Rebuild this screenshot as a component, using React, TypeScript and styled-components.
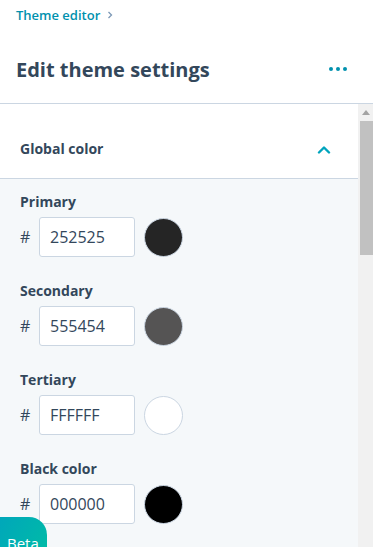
import React from 'react';
import styled, { createGlobalStyle } from 'styled-components';

const GlobalStyle = createGlobalStyle`
  html, body {
    margin: 0;
    padding: 0;
    height: 100%;
    overflow: hidden;
    background: #ffffff;
    font-family: "Open Sans", "Noto Sans", sans-serif;
    color: #33475b;
  }
  #root {
    height: 100%;
  }
`;

const Page = styled.div`
  display: flex;
  flex-direction: column;
  height: 547px;
`;

const Header = styled.header`
  display: flex;
  flex-direction: column;
  gap: 31px;
  padding: 5px 26px 19px 16px;
  border-bottom: 1px solid #cbd6e2;
`;

const Breadcrumb = styled.a`
  display: flex;
  align-items: center;
  gap: 7px;
  font-size: 13px;
  line-height: 20px;
  font-weight: 600;
  color: #0091ae;
  text-decoration: none;
`;

const TitleRow = styled.div`
  display: flex;
  align-items: center;
  justify-content: space-between;
`;

const Title = styled.h1`
  margin: 0;
  font-size: 20px;
  line-height: 28px;
  font-weight: 700;
  color: #33475b;
`;

const MenuButton = styled.button`
  display: flex;
  gap: 3px;
  padding: 0;
  margin-top: -3px;
  border: none;
  background: none;
`;

const Dot = styled.span`
  width: 4px;
  height: 4px;
  border-radius: 50%;
  background: #0091ae;
`;

const Body = styled.div`
  flex: 1;
  min-height: 0;
  display: flex;
`;

const Content = styled.div`
  flex: 1;
  overflow: hidden;
  background: #f5f8fa;
`;

const ScrollTrack = styled.div`
  width: 15px;
  display: flex;
  flex-direction: column;
  background: #f1f1f1;
`;

const ScrollArrow = styled.div`
  height: 17px;
  display: flex;
  align-items: center;
  justify-content: center;
`;

const ScrollThumb = styled.div`
  height: 134px;
  margin-left: 2px;
  background: #c1c1c1;
`;

const SectionHeader = styled.div`
  display: flex;
  align-items: center;
  justify-content: space-between;
  padding: 35px 27px 19px 20px;
  background: #ffffff;
  border-bottom: 1px solid #cbd6e2;
`;

const SectionTitle = styled.h2`
  margin: 0;
  font-size: 14px;
  line-height: 20px;
  font-weight: 700;
  color: #33475b;
`;

const ColorList = styled.div`
  display: flex;
  flex-direction: column;
  gap: 23px;
  padding: 12px 20px 40px;
`;

const Field = styled.div`
  display: flex;
  flex-direction: column;
  gap: 6px;
`;

const Label = styled.label`
  font-size: 14px;
  line-height: 20px;
  font-weight: 700;
  color: #33475b;
  transform: translateY(1px);
`;

const InputRow = styled.div`
  display: flex;
  align-items: center;
  gap: 9px;
`;

const Hash = styled.span`
  width: 10px;
  font-size: 16px;
  color: #33475b;
`;

const HexInput = styled.input`
  box-sizing: border-box;
  width: 96px;
  height: 40px;
  padding: 0 10px;
  border: 1px solid #cbd6e2;
  border-radius: 3px;
  background: #ffffff;
  font-family: inherit;
  font-size: 16px;
  color: #33475b;
  outline: none;
`;

const Swatch = styled.span<{ $color: string }>`
  box-sizing: border-box;
  width: 39px;
  height: 39px;
  border-radius: 50%;
  border: 1px solid #cbd6e2;
  background: ${(p) => p.$color};
`;

const BetaBadge = styled.div`
  position: fixed;
  left: -10px;
  bottom: -18px;
  width: 57px;
  height: 48px;
  box-sizing: border-box;
  padding: 16px 0 0 17px;
  border-radius: 0 18px 0 0;
  background: linear-gradient(120deg, #00a4bd 0%, #00bda5 100%);
  color: #ffffff;
  font-size: 15px;
  line-height: 20px;
`;

const colors = [
  { label: 'Primary', hex: '252525' },
  { label: 'Secondary', hex: '555454' },
  { label: 'Tertiary', hex: 'FFFFFF' },
  { label: 'Black color', hex: '000000' },
  { label: 'White color', hex: 'FFFFFF' },
];

export default function App() {
  return (
    <>
      <GlobalStyle />
      <Page>
        <Header>
          <Breadcrumb href="#">
            Theme editor
            <svg width="6" height="8" viewBox="0 0 6 8">
              <path d="M1.5 1l3 3-3 3" fill="none" stroke="#7c98b6" strokeWidth="1.3" />
            </svg>
          </Breadcrumb>
          <TitleRow>
            <Title>Edit theme settings</Title>
            <MenuButton aria-label="More">
              <Dot />
              <Dot />
              <Dot />
            </MenuButton>
          </TitleRow>
        </Header>
        <Body>
          <Content>
            <SectionHeader>
              <SectionTitle>Global color</SectionTitle>
              <svg width="14" height="9" viewBox="0 0 14 9">
                <path d="M2 7.5L7 2.5l5 5" fill="none" stroke="#00a4bd" strokeWidth="2.4" strokeLinecap="round" strokeLinejoin="round" />
              </svg>
            </SectionHeader>
            <ColorList>
              {colors.map((c) => (
                <Field key={c.label}>
                  <Label>{c.label}</Label>
                  <InputRow>
                    <Hash>#</Hash>
                    <HexInput defaultValue={c.hex} />
                    <Swatch $color={`#${c.hex}`} />
                  </InputRow>
                </Field>
              ))}
            </ColorList>
          </Content>
          <ScrollTrack>
            <ScrollArrow>
              <svg width="8" height="5" viewBox="0 0 8 5">
                <path d="M4 0L8 5H0z" fill="#a3a3a3" />
              </svg>
            </ScrollArrow>
            <ScrollThumb />
          </ScrollTrack>
        </Body>
      </Page>
      <BetaBadge>Beta</BetaBadge>
    </>
  );
}
